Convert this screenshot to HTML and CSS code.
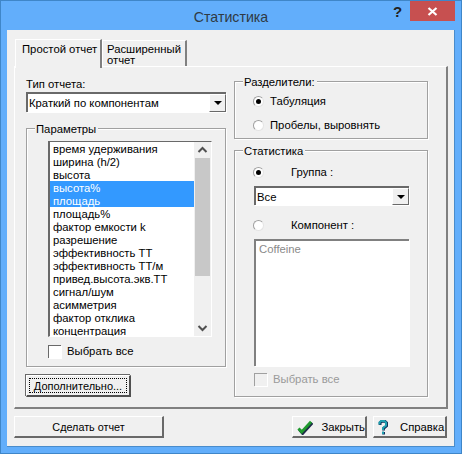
FILE: index.html
```html
<!DOCTYPE html>
<html lang="ru">
<head>
<meta charset="utf-8">
<title>Статистика</title>
<link rel="stylesheet" href="styles.css">
</head>
<body>
<div class="window">
  <header class="titlebar">
    <span class="title">Статистика</span>
    <span class="help">?</span>
    <span class="close"><svg width="11" height="9" viewBox="0 0 11 9"><path d="M1.5 1 9.5 8M9.5 1 1.5 8" stroke="#fff" stroke-width="2.2" fill="none"/></svg></span>
  </header>
  <main class="client">
    <div class="tabs">
      <div class="tab tab-active">Простой отчет</div>
      <div class="tab tab-other">Расширенный<br>отчет</div>
    </div>
    <section class="page">
      <div class="col-left">
        <div class="field-label">Тип отчета:</div>
        <div class="combo combo-wide"><span class="combo-text">Краткий по компонентам</span><span class="combo-btn"><i></i></span></div>
        <div class="group group-params">
          <div class="legend">Параметры</div>
          <div class="listbox">
            <ul class="items">
              <li>время удерживания</li>
              <li>ширина (h/2)</li>
              <li>высота</li>
              <li class="sel">высота%</li>
              <li class="sel">площадь</li>
              <li>площадь%</li>
              <li>фактор емкости k</li>
              <li>разрешение</li>
              <li>эффективность ТТ</li>
              <li>эффективность ТТ/м</li>
              <li>привед.высота.экв.ТТ</li>
              <li>сигнал/шум</li>
              <li>асимметрия</li>
              <li>фактор отклика</li>
              <li>концентрация</li>
            </ul>
            <div class="scrollbar">
              <svg class="arrow" width="15" height="16" viewBox="0 0 15 16"><path d="M3.5 10 7.5 6 11.5 10" stroke="#505050" stroke-width="2" fill="none"/></svg>
              <div class="thumb"></div>
              <div class="track"></div>
              <svg class="arrow" width="15" height="16" viewBox="0 0 15 16"><path d="M3.5 6 7.5 10 11.5 6" stroke="#505050" stroke-width="2" fill="none"/></svg>
            </div>
          </div>
          <label class="check check-params"><span class="box"></span><span>Выбрать все</span></label>
        </div>
        <button class="btn btn-more"><span class="focus">Дополнительно...</span></button>
      </div>
      <div class="col-right">
        <div class="group group-sep">
          <div class="legend">Разделители:</div>
          <div class="radio radio-tab"><span class="dot on"></span><span>Табуляция</span></div>
          <div class="radio radio-space"><span class="dot"></span><span>Пробелы, выровнять</span></div>
        </div>
        <div class="group group-stat">
          <div class="legend">Статистика</div>
          <div class="radio radio-group"><span class="dot on"></span><span class="radio-far">Группа :</span></div>
          <div class="combo combo-small"><span class="combo-text">Все</span><span class="combo-btn"><i></i></span></div>
          <div class="radio radio-comp"><span class="dot"></span><span class="radio-far">Компонент :</span></div>
          <div class="complist">Coffeine</div>
          <label class="check check-off"><span class="box box-off"></span><span>Выбрать все</span></label>
        </div>
      </div>
    </section>
    <footer class="footer">
      <button class="btn btn-make"><span>Сделать отчет</span></button>
      <button class="btn btn-close">
        <svg width="17" height="15" viewBox="0 0 17 15"><path d="M1.5 9 5 13 15 2" stroke="#1c2a48" stroke-width="2.8" fill="none" transform="translate(.8 .8)"/><path d="M1.5 8.5 4.8 12 14.5 1.5" stroke="#1f9a2e" stroke-width="3" fill="none"/></svg>
        <span>Закрыть</span>
      </button>
      <button class="btn btn-help">
        <svg width="10" height="15" viewBox="0 0 10 15"><path d="M1.5 4.5V2.5L3 1H6.5L8 2.5V5.5L5 8V10M5 11.5V14" stroke="#12305a" stroke-width="2.8" fill="none" transform="translate(.6 .4)"/><path d="M1.5 4.5V2.5L3 1H6.5L8 2.5V5.5L5 8V10M5 11.5V14" stroke="#1f9fb0" stroke-width="2" fill="none"/></svg>
        <span>Справка</span>
      </button>
    </footer>
  </main>
</div>
</body>
</html>
```
FILE: styles.css
```css
* { box-sizing: border-box; }
html, body { margin: 0; padding: 0; }
body {
  width: 462px;
  height: 454px;
  overflow: hidden;
  font-family: "Liberation Sans", Arial, sans-serif;
  font-size: 11.3px;
  line-height: 13px;
  color: #000;
}
.window {
  width: 462px;
  height: 454px;
  background: #62aefb;
  border: 1px solid #3f86c8;
  padding: 0 6px 6px;
  display: flex;
  flex-direction: column;
}
.titlebar {
  height: 29px;
  flex: none;
  display: flex;
  align-items: flex-start;
  justify-content: center;
  position: relative;
}
.title {
  font-size: 14.2px;
  line-height: 20px;
  margin-top: 6px;
  color: #2f3a44;
}
.help {
  position: absolute;
  left: 386px;
  top: 1px;
  font-size: 15px;
  line-height: 20px;
  font-weight: bold;
  color: #222;
}
.close {
  position: absolute;
  left: 403px;
  top: 0;
  width: 45px;
  height: 20px;
  background: #c75050;
  display: flex;
  align-items: center;
  justify-content: center;
}
.client {
  flex: 1;
  background: #f0f0f0;
  border-right: 1px solid #4a8ccb;
  border-bottom: 1px solid #4a8ccb;
  padding: 9px 6px 0 7px;
  display: flex;
  flex-direction: column;
}
.tabs {
  display: flex;
  align-items: flex-end;
  height: 27px;
  margin-left: 1px;
  position: relative;
  z-index: 1;
}
.tab {
  background: #f0f0f0;
  border-top: 1px solid #fff;
  border-left: 1px solid #fff;
  border-right: 2px solid #808080;
}
.tab-active {
  width: 87px;
  height: 29px;
  margin-bottom: -2px;
  padding: 3px 0 0 6px;
  white-space: nowrap;
}
.tab-other {
  width: 85px;
  height: 26px;
  padding: 3px 0 0 4px;
  line-height: 11px;
  overflow: hidden;
}
.page {
  width: 434px;
  height: 343px;
  flex: none;
  background: #f0f0f0;
  border-top: 1px solid #fff;
  border-left: 1px solid #fff;
  border-right: 2px solid #808080;
  border-bottom: 2px solid #808080;
  padding: 9px 0 0 11px;
  display: grid;
  grid-template-columns: 200px 194px;
  column-gap: 8px;
  align-items: start;
}
.field-label { height: 16px; padding-top: 2px; }
.combo {
  display: flex;
  background: #fff;
  border-top: 2px solid #696969;
  border-left: 2px solid #696969;
  box-shadow: 1px 1px 0 #fff;
}
.combo-wide { height: 20px; }
.combo-small { height: 19px; width: 155px; margin: 7px 0 0 19px; }
.combo-text { flex: 1; padding: 3px 0 0 1px; }
.combo-btn {
  width: 17px;
  background: #f0f0f0;
  border-top: 1px solid #fff;
  border-left: 1px solid #fff;
  border-right: 1px solid #696969;
  border-bottom: 1px solid #696969;
  display: flex;
  align-items: center;
  justify-content: center;
}
.combo-btn i {
  width: 0;
  height: 0;
  border-left: 4px solid transparent;
  border-right: 4px solid transparent;
  border-top: 4px solid #000;
}
.group {
  border: 1px solid #a0a0a0;
  box-shadow: 1px 1px 0 #fff, inset 1px 1px 0 #fff;
}
.legend {
  display: table;
  height: 13px;
  margin: -6px 0 0 8px;
  padding: 0 2px 0 1px;
  background: #f0f0f0;
}
.group-params {
  height: 239px;
  margin-top: 16px;
}
.listbox {
  width: 164px;
  height: 196px;
  margin: 5px 0 0 21px;
  display: flex;
  background: #fff;
  border-top: 1px solid #696969;
  border-left: 2px solid #696969;
  border-right: 1px solid #fff;
  border-bottom: 1px solid #fff;
}
.items {
  list-style: none;
  margin: 0;
  padding: 0;
  flex: 1;
  overflow: hidden;
}
.items li {
  height: 13px;
  padding: 1px 0 0 3px;
  white-space: nowrap;
}
.items li.sel { background: #3399ff; color: #fff; }
.scrollbar {
  width: 17px;
  background: #f0f0f0;
  padding-left: 1px;
  display: flex;
  flex-direction: column;
}
.arrow { flex: none; display: block; }
.thumb { height: 118px; width: 15px; background: #c8c8c8; flex: none; }
.track { flex: 1; }
.check { display: flex; align-items: center; gap: 6px; }
.box {
  width: 13px;
  height: 13px;
  background: #fff;
  border-top: 1px solid #696969;
  border-left: 1px solid #696969;
  box-shadow: 1px 1px 0 #fff;
  display: block;
  flex: none;
}
.check-params { margin: 8px 0 0 21px; }
.btn {
  font: inherit;
  color: #000;
  background: #f0f0f0;
  border-top: 1px solid #fff;
  border-left: 1px solid #fff;
  border-right: 2px solid #696969;
  border-bottom: 2px solid #696969;
}
.btn-more {
  display: block;
  width: 105px;
  height: 22px;
  margin-top: 8px;
  padding: 2px;
  font-size: 11px;
  border-right: 2px solid #505050;
  border-bottom: 2px solid #505050;
  box-shadow: -1px -1px 0 #696969;
}
.focus {
  display: flex;
  height: 100%;
  align-items: center;
  justify-content: center;
  padding-top: 1px;
  border: 1px dotted #000;
}
.group-sep { height: 58px; margin-top: 5px; }
.group-stat { height: 247px; margin-top: 11px; }
.radio { display: flex; align-items: center; height: 14px; }
.dot {
  width: 11px;
  height: 11px;
  flex: none;
  border-radius: 50%;
  background: #fff;
  border: 1px solid #a0a0a0;
  border-right-color: #e4e4e4;
  border-bottom-color: #e4e4e4;
  display: flex;
  align-items: center;
  justify-content: center;
}
.dot.on::after {
  content: "";
  width: 5px;
  height: 5px;
  border-radius: 50%;
  background: #000;
}
.radio-tab { margin: 5px 0 0 18px; gap: 6px; }
.radio-space { margin: 10px 0 0 18px; gap: 6px; }
.radio-far { margin-left: 27px; }
.radio-group { margin: 7px 0 0 18px; }
.radio-comp { margin: 13px 0 0 18px; }
.complist {
  width: 155px;
  height: 127px;
  margin: 7px 0 0 19px;
  padding: 2px 0 0 3px;
  background: #fff;
  color: #8a8a8a;
  border-top: 2px solid #808080;
  border-left: 2px solid #808080;
  box-shadow: 1px 1px 0 #fff;
}
.check-off { margin: 7px 0 0 19px; color: #9a9a9a; }
.box-off { background: #f0f0f0; border-color: #a0a0a0; }
.footer {
  display: flex;
  margin-top: 7px;
  height: 22px;
}
.footer .btn { height: 22px; }
.btn-make { width: 150px; padding: 1px 0 0; font-size: 10.8px; }
.btn-close {
  width: 75px;
  margin-left: 128px;
  display: flex;
  align-items: center;
  padding: 1px 0 0 4px;
  gap: 8px;
}
.btn-help {
  width: 74px;
  margin-left: 6px;
  display: flex;
  align-items: center;
  padding: 1px 0 0 4px;
  gap: 12px;
}
```
